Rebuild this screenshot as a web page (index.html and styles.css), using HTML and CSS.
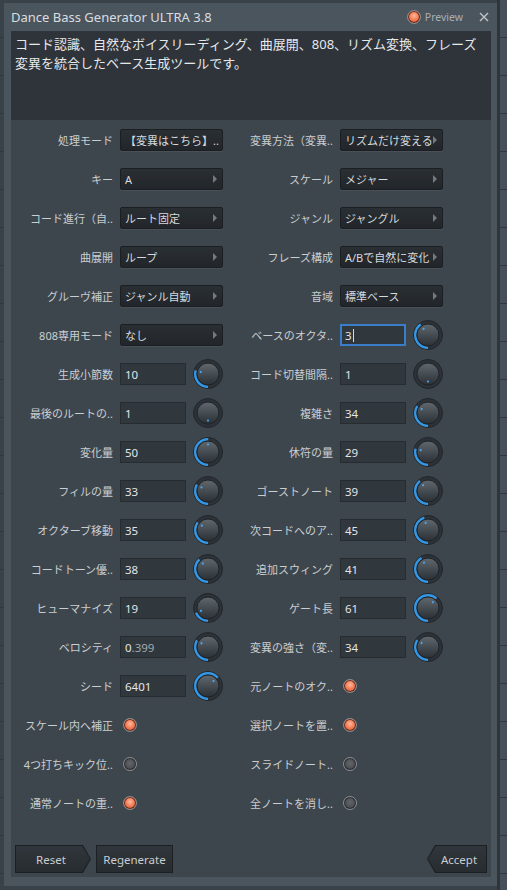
FILE: index.html
```html
<!DOCTYPE html>
<html lang="ja">
<head>
<meta charset="utf-8">
<title>Dance Bass Generator ULTRA 3.8</title>
<link rel="stylesheet" href="styles.css">
</head>
<body>
<svg class="defs" aria-hidden="true"><defs><linearGradient id="kb" x1="0" y1="0" x2="0" y2="1"><stop offset="0" stop-color="#60686e"/><stop offset="1" stop-color="#2a3035"/></linearGradient></defs></svg>
<div class="desk">
  <div class="window">
    <div class="titlebar">
      <div class="title">Dance Bass Generator ULTRA 3.8</div>
      <div class="preview"><span class="led on"></span><span>Preview</span></div>
      <svg class="close" viewBox="0 0 10 10"><path d="M1 1L9 9M9 1L1 9"/></svg>
    </div>
    <div class="desc">コード認識、自然なボイスリーディング、曲展開、808、リズム変換、フレーズ変異を統合したベース生成ツールです。</div>
    <div class="panel">
      <div class="grid">
        <div class="cell"><span class="lbl">処理モード</span><div class="dd"><span class="dd-text">【変異はこちら】..</span></div></div>
        <div class="cell"><span class="lbl">変異方法（変異..</span><div class="dd"><span class="dd-text">リズムだけ変える</span><i class="caret"></i></div></div>

        <div class="cell"><span class="lbl">キー</span><div class="dd"><span class="dd-text">A</span><i class="caret"></i></div></div>
        <div class="cell"><span class="lbl">スケール</span><div class="dd"><span class="dd-text">メジャー</span><i class="caret"></i></div></div>

        <div class="cell"><span class="lbl">コード進行（自..</span><div class="dd"><span class="dd-text">ルート固定</span><i class="caret"></i></div></div>
        <div class="cell"><span class="lbl">ジャンル</span><div class="dd"><span class="dd-text">ジャングル</span><i class="caret"></i></div></div>

        <div class="cell"><span class="lbl">曲展開</span><div class="dd"><span class="dd-text">ループ</span><i class="caret"></i></div></div>
        <div class="cell"><span class="lbl">フレーズ構成</span><div class="dd"><span class="dd-text">A/Bで自然に変化</span><i class="caret"></i></div></div>

        <div class="cell"><span class="lbl">グルーヴ補正</span><div class="dd"><span class="dd-text">ジャンル自動</span><i class="caret"></i></div></div>
        <div class="cell"><span class="lbl">音域</span><div class="dd"><span class="dd-text">標準ベース</span><i class="caret"></i></div></div>

        <div class="cell"><span class="lbl">808専用モード</span><div class="dd"><span class="dd-text">なし</span><i class="caret"></i></div></div>
        <div class="cell"><span class="lbl">ベースのオクタ..</span><div class="ctrl"><div class="num focus">3<span class="cursor"></span></div><svg class="knob" viewBox="0 0 30 30"><circle cx="15" cy="15" r="14.5" class="k-ring"/><circle cx="15" cy="15" r="12.8" class="k-arc" stroke-dasharray="32.2 100" transform="rotate(90 15 15)"/><circle cx="15" cy="15" r="11" class="k-body"/><circle cx="15" cy="7.5" r="1.1" class="k-dot" transform="rotate(324 15 15)"/></svg></div></div>

        <div class="cell"><span class="lbl">生成小節数</span><div class="ctrl"><div class="num">10</div><svg class="knob" viewBox="0 0 30 30"><circle cx="15" cy="15" r="14.5" class="k-ring"/><circle cx="15" cy="15" r="12.8" class="k-arc" stroke-dasharray="23.7 100" transform="rotate(90 15 15)"/><circle cx="15" cy="15" r="11" class="k-body"/><circle cx="15" cy="7.5" r="1.1" class="k-dot" transform="rotate(286 15 15)"/></svg></div></div>
        <div class="cell"><span class="lbl">コード切替間隔..</span><div class="ctrl"><div class="num">1</div><svg class="knob" viewBox="0 0 30 30"><circle cx="15" cy="15" r="14.5" class="k-ring"/><circle cx="15" cy="15" r="12.8" class="k-arc" stroke-dasharray="0 100" transform="rotate(90 15 15)"/><circle cx="15" cy="15" r="11" class="k-body"/><circle cx="15" cy="7.5" r="1.1" class="k-dot" transform="rotate(180 15 15)"/></svg></div></div>

        <div class="cell"><span class="lbl">最後のルートの..</span><div class="ctrl"><div class="num">1</div><svg class="knob" viewBox="0 0 30 30"><circle cx="15" cy="15" r="14.5" class="k-ring"/><circle cx="15" cy="15" r="12.8" class="k-arc" stroke-dasharray="0 100" transform="rotate(90 15 15)"/><circle cx="15" cy="15" r="11" class="k-body"/><circle cx="15" cy="7.5" r="1.1" class="k-dot" transform="rotate(180 15 15)"/></svg></div></div>
        <div class="cell"><span class="lbl">複雑さ</span><div class="ctrl"><div class="num">34</div><svg class="knob" viewBox="0 0 30 30"><circle cx="15" cy="15" r="14.5" class="k-ring"/><circle cx="15" cy="15" r="12.8" class="k-arc" stroke-dasharray="27.3 100" transform="rotate(90 15 15)"/><circle cx="15" cy="15" r="11" class="k-body"/><circle cx="15" cy="7.5" r="1.1" class="k-dot" transform="rotate(302 15 15)"/></svg></div></div>

        <div class="cell"><span class="lbl">変化量</span><div class="ctrl"><div class="num">50</div><svg class="knob" viewBox="0 0 30 30"><circle cx="15" cy="15" r="14.5" class="k-ring"/><circle cx="15" cy="15" r="12.8" class="k-arc" stroke-dasharray="40.2 100" transform="rotate(90 15 15)"/><circle cx="15" cy="15" r="11" class="k-body"/><circle cx="15" cy="7.5" r="1.1" class="k-dot" transform="rotate(360 15 15)"/></svg></div></div>
        <div class="cell"><span class="lbl">休符の量</span><div class="ctrl"><div class="num">29</div><svg class="knob" viewBox="0 0 30 30"><circle cx="15" cy="15" r="14.5" class="k-ring"/><circle cx="15" cy="15" r="12.8" class="k-arc" stroke-dasharray="23.3 100" transform="rotate(90 15 15)"/><circle cx="15" cy="15" r="11" class="k-body"/><circle cx="15" cy="7.5" r="1.1" class="k-dot" transform="rotate(284 15 15)"/></svg></div></div>

        <div class="cell"><span class="lbl">フィルの量</span><div class="ctrl"><div class="num">33</div><svg class="knob" viewBox="0 0 30 30"><circle cx="15" cy="15" r="14.5" class="k-ring"/><circle cx="15" cy="15" r="12.8" class="k-arc" stroke-dasharray="26.6 100" transform="rotate(90 15 15)"/><circle cx="15" cy="15" r="11" class="k-body"/><circle cx="15" cy="7.5" r="1.1" class="k-dot" transform="rotate(299 15 15)"/></svg></div></div>
        <div class="cell"><span class="lbl">ゴーストノート</span><div class="ctrl"><div class="num">39</div><svg class="knob" viewBox="0 0 30 30"><circle cx="15" cy="15" r="14.5" class="k-ring"/><circle cx="15" cy="15" r="12.8" class="k-arc" stroke-dasharray="31.3 100" transform="rotate(90 15 15)"/><circle cx="15" cy="15" r="11" class="k-body"/><circle cx="15" cy="7.5" r="1.1" class="k-dot" transform="rotate(320 15 15)"/></svg></div></div>

        <div class="cell"><span class="lbl">オクターブ移動</span><div class="ctrl"><div class="num">35</div><svg class="knob" viewBox="0 0 30 30"><circle cx="15" cy="15" r="14.5" class="k-ring"/><circle cx="15" cy="15" r="12.8" class="k-arc" stroke-dasharray="28.1 100" transform="rotate(90 15 15)"/><circle cx="15" cy="15" r="11" class="k-body"/><circle cx="15" cy="7.5" r="1.1" class="k-dot" transform="rotate(306 15 15)"/></svg></div></div>
        <div class="cell"><span class="lbl">次コードへのア..</span><div class="ctrl"><div class="num">45</div><svg class="knob" viewBox="0 0 30 30"><circle cx="15" cy="15" r="14.5" class="k-ring"/><circle cx="15" cy="15" r="12.8" class="k-arc" stroke-dasharray="36.2 100" transform="rotate(90 15 15)"/><circle cx="15" cy="15" r="11" class="k-body"/><circle cx="15" cy="7.5" r="1.1" class="k-dot" transform="rotate(342 15 15)"/></svg></div></div>

        <div class="cell"><span class="lbl">コードトーン優..</span><div class="ctrl"><div class="num">38</div><svg class="knob" viewBox="0 0 30 30"><circle cx="15" cy="15" r="14.5" class="k-ring"/><circle cx="15" cy="15" r="12.8" class="k-arc" stroke-dasharray="30.6 100" transform="rotate(90 15 15)"/><circle cx="15" cy="15" r="11" class="k-body"/><circle cx="15" cy="7.5" r="1.1" class="k-dot" transform="rotate(317 15 15)"/></svg></div></div>
        <div class="cell"><span class="lbl">追加スウィング</span><div class="ctrl"><div class="num">41</div><svg class="knob" viewBox="0 0 30 30"><circle cx="15" cy="15" r="14.5" class="k-ring"/><circle cx="15" cy="15" r="12.8" class="k-arc" stroke-dasharray="33.1 100" transform="rotate(90 15 15)"/><circle cx="15" cy="15" r="11" class="k-body"/><circle cx="15" cy="7.5" r="1.1" class="k-dot" transform="rotate(328 15 15)"/></svg></div></div>

        <div class="cell"><span class="lbl">ヒューマナイズ</span><div class="ctrl"><div class="num">19</div><svg class="knob" viewBox="0 0 30 30"><circle cx="15" cy="15" r="14.5" class="k-ring"/><circle cx="15" cy="15" r="12.8" class="k-arc" stroke-dasharray="15.2 100" transform="rotate(90 15 15)"/><circle cx="15" cy="15" r="11" class="k-body"/><circle cx="15" cy="7.5" r="1.1" class="k-dot" transform="rotate(248 15 15)"/></svg></div></div>
        <div class="cell"><span class="lbl">ゲート長</span><div class="ctrl"><div class="num">61</div><svg class="knob" viewBox="0 0 30 30"><circle cx="15" cy="15" r="14.5" class="k-ring"/><circle cx="15" cy="15" r="12.8" class="k-arc" stroke-dasharray="49.1 100" transform="rotate(90 15 15)"/><circle cx="15" cy="15" r="11" class="k-body"/><circle cx="15" cy="7.5" r="1.1" class="k-dot" transform="rotate(400 15 15)"/></svg></div></div>

        <div class="cell"><span class="lbl">ベロシティ</span><div class="ctrl"><div class="num">0<span class="dim">.399</span></div><svg class="knob" viewBox="0 0 30 30"><circle cx="15" cy="15" r="14.5" class="k-ring"/><circle cx="15" cy="15" r="12.8" class="k-arc" stroke-dasharray="26.8 100" transform="rotate(90 15 15)"/><circle cx="15" cy="15" r="11" class="k-body"/><circle cx="15" cy="7.5" r="1.1" class="k-dot" transform="rotate(300 15 15)"/></svg></div></div>
        <div class="cell"><span class="lbl">変異の強さ（変..</span><div class="ctrl"><div class="num">34</div><svg class="knob" viewBox="0 0 30 30"><circle cx="15" cy="15" r="14.5" class="k-ring"/><circle cx="15" cy="15" r="12.8" class="k-arc" stroke-dasharray="27.3 100" transform="rotate(90 15 15)"/><circle cx="15" cy="15" r="11" class="k-body"/><circle cx="15" cy="7.5" r="1.1" class="k-dot" transform="rotate(302 15 15)"/></svg></div></div>

        <div class="cell"><span class="lbl">シード</span><div class="ctrl"><div class="num">6401</div><svg class="knob" viewBox="0 0 30 30"><circle cx="15" cy="15" r="14.5" class="k-ring"/><circle cx="15" cy="15" r="12.8" class="k-arc" stroke-dasharray="50.9 100" transform="rotate(90 15 15)"/><circle cx="15" cy="15" r="11" class="k-body"/><circle cx="15" cy="7.5" r="1.1" class="k-dot" transform="rotate(408 15 15)"/></svg></div></div>
        <div class="cell"><span class="lbl">元ノートのオク..</span><span class="led on"></span></div>

        <div class="cell"><span class="lbl">スケール内へ補正</span><span class="led on"></span></div>
        <div class="cell"><span class="lbl">選択ノートを置..</span><span class="led on"></span></div>

        <div class="cell"><span class="lbl">4つ打ちキック位..</span><span class="led"></span></div>
        <div class="cell"><span class="lbl">スライドノート..</span><span class="led"></span></div>

        <div class="cell"><span class="lbl">通常ノートの重..</span><span class="led on"></span></div>
        <div class="cell"><span class="lbl">全ノートを消し..</span><span class="led"></span></div>
      </div>
      <div class="footer">
        <div class="btn btn-next"><div class="btn-face">Reset</div></div>
        <div class="btn btn-rect"><div class="btn-face">Regenerate</div></div>
        <div class="btn btn-back"><div class="btn-face">Accept</div></div>
      </div>
    </div>
  </div>
</div>
</body>
</html>
```

FILE: styles.css
```css
* { box-sizing: border-box; }

body {
  margin: 0;
  background: #363d44;
  font-family: "Noto Sans", "Noto Sans CJK JP", sans-serif;
}

.defs {
  position: absolute;
  width: 0;
  height: 0;
  overflow: hidden;
}

.desk {
  width: 507px;
  height: 890px;
  padding: 3px 10px 4px 4px;
  background-color: #3a4249;
  background-image:
    repeating-linear-gradient(to bottom, transparent 0 37px, #30373d 37px 38px),
    linear-gradient(to right, transparent 0 497px, #2f353b 497px 500px, #46505a 500px);
}

.window {
  width: 493px;
  height: 883px;
  background: #4b555e;
  display: flex;
  flex-direction: column;
  padding: 0 6px 9px 7px;
}

.titlebar {
  height: 28px;
  flex: none;
  display: flex;
  align-items: center;
  padding-right: 2px;
}

.title {
  flex: 1;
  font-size: 13px;
  color: #d9dde0;
  white-space: nowrap;
}

.preview {
  display: flex;
  align-items: center;
  gap: 4px;
  font-size: 10.5px;
  color: #a8aeb3;
}

.close {
  width: 10px;
  height: 10px;
  margin-left: 16px;
}

.close path {
  stroke: #bfc4c8;
  stroke-width: 1.4;
  fill: none;
}

.desc {
  height: 89px;
  flex: none;
  background: #2e343a;
  padding: 4px 6px 4px 4px;
  color: #e6e8ea;
  font-size: 13px;
  line-height: 19px;
}

.panel {
  flex: 1;
  background: #3e464d;
  display: flex;
  flex-direction: column;
  padding: 5px 0 4px 0;
}

.grid {
  display: grid;
  grid-template-columns: 220px 220px;
  grid-auto-rows: 30px;
  row-gap: 9px;
}

.cell {
  display: flex;
  align-items: center;
  gap: 7px;
}

.lbl {
  width: 102px;
  flex: none;
  text-align: right;
  font-size: 11px;
  color: #c9ced2;
  white-space: nowrap;
  overflow: hidden;
}

.dd {
  width: 103px;
  height: 22px;
  display: flex;
  align-items: center;
  padding-left: 4px;
  background: linear-gradient(#2a2f33, #22262a);
  border: 1px solid #1b1f22;
  border-radius: 2px;
  box-shadow: 0 1px 0 rgba(255, 255, 255, 0.06);
  font-size: 11px;
  color: #d6dade;
}

.dd-text {
  flex: 1;
  white-space: nowrap;
  overflow: hidden;
}

.caret {
  flex: none;
  width: 0;
  height: 0;
  margin-right: 5px;
  border-left: 4px solid #737b81;
  border-top: 4px solid transparent;
  border-bottom: 4px solid transparent;
}

.ctrl {
  display: flex;
  align-items: center;
  gap: 7px;
}

.num {
  width: 66px;
  height: 22px;
  display: flex;
  align-items: center;
  padding-left: 4px;
  background: #30373d;
  border: 1px solid #272c31;
  font-size: 11.5px;
  color: #e2e5e8;
}

.num.focus {
  border: 2px solid #3a7dc9;
  padding-left: 3px;
}

.cursor {
  width: 1px;
  height: 13px;
  margin-left: 1px;
  background: #d6dade;
}

.dim {
  color: #a3aaaf;
}

.knob {
  width: 30px;
  height: 30px;
  flex: none;
}

.k-ring {
  fill: #2c3237;
  stroke: #22272b;
  stroke-width: 1;
}

.k-arc {
  fill: none;
  stroke: #3498e8;
  stroke-width: 2.4;
}

.k-body {
  fill: url(#kb);
  stroke: #1e2327;
  stroke-width: 1;
}

.k-dot {
  fill: #4aa6f2;
}

.led {
  width: 14px;
  height: 14px;
  flex: none;
  margin-left: 3px;
  border-radius: 50%;
  border: 1px solid #8a8f93;
  background: radial-gradient(circle at 50% 45%, #62666a 0, #46494c 70%, #34383b 100%);
  box-shadow: inset 0 0 0 1px #26292c;
}

.led.on {
  background: radial-gradient(circle at 50% 40%, #ffb89c 0, #f37c55 45%, #c8431f 100%);
  box-shadow: inset 0 0 0 1px #5a2a1c;
}

.preview .led {
  margin-left: 0;
}

.footer {
  margin-top: auto;
  height: 28px;
  display: flex;
  gap: 5px;
  padding: 0 4px;
}

.btn {
  height: 28px;
  background: #1c2023;
}

.btn-face {
  height: 26px;
  margin: 1px;
  display: flex;
  align-items: center;
  justify-content: center;
  background: linear-gradient(#30363b, #272c30);
  font-size: 11.5px;
  color: #c8cdd1;
}

.btn-next {
  width: 76px;
  clip-path: polygon(0 0, 68px 0, 100% 50%, 68px 100%, 0 100%);
}

.btn-next .btn-face {
  clip-path: polygon(0 0, 66px 0, 100% 50%, 66px 100%, 0 100%);
  padding-right: 4px;
}

.btn-rect {
  width: 77px;
}

.btn-back {
  width: 60px;
  margin-left: auto;
  clip-path: polygon(8px 0, 100% 0, 100% 100%, 8px 100%, 0 50%);
}

.btn-back .btn-face {
  clip-path: polygon(8px 0, 100% 0, 100% 100%, 8px 100%, 0 50%);
  padding-left: 4px;
}
```
